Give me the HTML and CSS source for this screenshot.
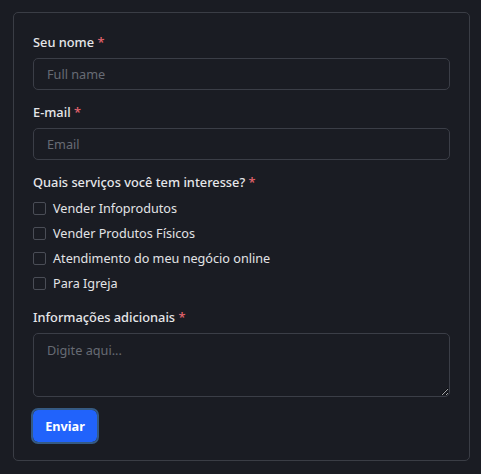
FILE: index.html
```html
<!DOCTYPE html>
<html lang="pt-BR">
<head>
<meta charset="utf-8">
<link rel="stylesheet" href="styles.css">
</head>
<body>
<form class="card">
  <div class="field">
    <label class="label">Seu nome <span class="req">*</span></label>
    <input class="input" type="text" placeholder="Full name">
  </div>
  <div class="field">
    <label class="label">E-mail <span class="req">*</span></label>
    <input class="input" type="email" placeholder="Email">
  </div>
  <div class="field field-checks">
    <label class="label">Quais serviços você tem interesse? <span class="req">*</span></label>
    <div class="checks">
      <label class="check"><input type="checkbox" class="box"><span>Vender Infoprodutos</span></label>
      <label class="check"><input type="checkbox" class="box"><span>Vender Produtos Físicos</span></label>
      <label class="check"><input type="checkbox" class="box"><span>Atendimento do meu negócio online</span></label>
      <label class="check"><input type="checkbox" class="box"><span>Para Igreja</span></label>
    </div>
  </div>
  <div class="field">
    <label class="label">Informações adicionais <span class="req">*</span></label>
    <textarea class="input textarea" placeholder="Digite aqui..."></textarea>
  </div>
  <button type="button" class="btn">Enviar</button>
</form>
</body>
</html>
```
FILE: styles.css
```css
html, body {
  margin: 0;
  background: #1a1c23;
  color-scheme: dark;
}
body {
  padding: 12px 11px 12px 13px;
  font-family: "Noto Sans", "Open Sans", sans-serif;
  color: #e4e5e8;
}
.card {
  border: 1px solid #3a3d45;
  border-radius: 5px;
  padding: 19px 19px 18px 19px;
  display: flex;
  flex-direction: column;
  align-items: flex-start;
}
.field {
  width: 100%;
  display: flex;
  flex-direction: column;
  margin-bottom: 12px;
}
.field-checks {
  margin-bottom: 14px;
}
.label {
  font-size: 12.8px;
  font-weight: 500;
  line-height: 20px;
  color: #e6e7ea;
  margin-bottom: 6px;
}
.req {
  color: #e5646e;
}
.input {
  box-sizing: border-box;
  width: 100%;
  height: 32px;
  background: #1a1c23;
  border: 1px solid #3b3e47;
  border-radius: 5px;
  padding: 0 13px;
  font-family: inherit;
  font-size: 12.7px;
  color: #e4e5e8;
  outline: none;
  margin: 0;
}
.input::placeholder {
  color: #676b74;
}
.textarea {
  height: 64px;
  padding: 7px 13px;
  resize: vertical;
  display: block;
}
.checks {
  display: flex;
  flex-direction: column;
  gap: 5px;
}
.check {
  display: flex;
  align-items: center;
  gap: 7px;
  height: 20px;
  font-size: 12.65px;
  color: #e2e3e6;
}
.box {
  appearance: none;
  -webkit-appearance: none;
  margin: 0;
  width: 13px;
  height: 13px;
  border: 1px solid #4a4d56;
  border-radius: 2px;
  background: transparent;
}
.btn {
  margin-top: 1px;
  width: 64px;
  height: 32px;
  background: #2163fb;
  border: none;
  border-radius: 5px;
  outline: 2px solid #355a84;
  outline-offset: 0;
  color: #ffffff;
  font-family: inherit;
  font-size: 12.7px;
  font-weight: 700;
  padding: 0;
}
```
